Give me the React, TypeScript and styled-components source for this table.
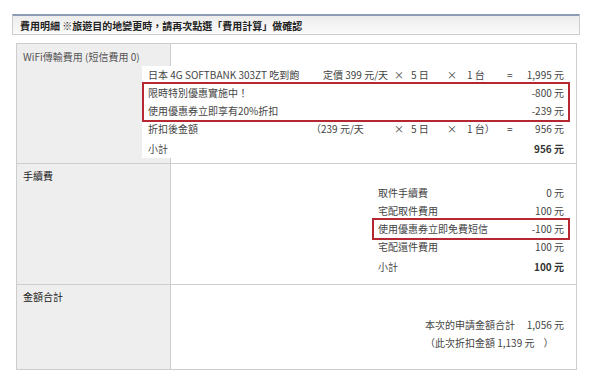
import styled, { createGlobalStyle } from 'styled-components';

const red = "#b52832";
const line = "#cdcdcd";

const GlobalStyle = createGlobalStyle`
  body {
    margin: 0;
    background: #ffffff;
    font-family: "Noto Sans CJK TC", "Noto Sans", sans-serif;
  }
`;

const Page = styled.div`
  width: 600px;
  height: 384px;
  box-sizing: border-box;
  padding: 14px 0 0 12px;
`;

const Header = styled.div`
  width: 568px;
  height: 21px;
  box-sizing: border-box;
  display: flex;
  align-items: center;
  padding-left: 7px;
  border: 1px solid ${line};
  border-top: 2px solid #8d9cb2;
  background: linear-gradient(#ececec, #fbfbfb);
  font-size: 10px;
  font-weight: bold;
  color: #222;
`;

const Table = styled.div`
  margin: 8px 0 0 4px;
  width: 561px;
  box-sizing: border-box;
  border: 1px solid ${line};
`;

const Section = styled.div<{ $height: number }>`
  display: grid;
  grid-template-columns: 154px 1fr;
  height: ${p => p.$height}px;
  & + & {
    border-top: 1px solid ${line};
  }
`;

const Label = styled.div<{ $top: number; $muted?: boolean }>`
  background: #eeeeee;
  border-right: 1px solid ${line};
  padding: ${p => p.$top}px 6px 0;
  font-size: 10px;
  line-height: 18px;
  color: ${p => (p.$muted ? "#555" : "#222")};
`;

const Content = styled.div<{ $top: number }>`
  display: flex;
  flex-direction: column;
  align-items: flex-end;
  padding-top: ${p => p.$top}px;
  padding-right: 6px;
  min-width: 0;
`;

const List = styled.div<{ $width: number }>`
  width: ${p => p.$width}px;
  background: #ffffff;
  font-size: 10px;
  line-height: 18px;
  color: #444;
`;

const Row = styled.div<{ $total?: boolean }>`
  display: flex;
  justify-content: space-between;
  padding: 0 6px;
  white-space: nowrap;
  margin-top: ${p => (p.$total ? 2 : 0)}px;
`;

const PriceRow = styled.div`
  display: grid;
  grid-template-columns: 175px 71px 17px 36px 20px 40px 13px 1fr;
  padding: 0 6px;
  white-space: nowrap;
`;

const Amount = styled.span<{ $bold?: boolean }>`
  text-align: right;
  font-weight: ${p => (p.$bold ? "bold" : "normal")};
  color: ${p => (p.$bold ? "#333" : "#444")};
`;

const Hang = styled.span`
  margin-left: -12px;
`;

const Boxed = styled.div`
  margin: -2px 0;
  border: 2px solid ${red};
  & > div {
    padding: 0 4px;
  }
`;

const Note = styled.div`
  padding: 0 6px;
  white-space: pre;
`;

export default function App() {
  return (
    <Page>
      <GlobalStyle />
      <Header>費用明細 ※旅遊目的地變更時，請再次點選「費用計算」做確認</Header>
      <Table>
        <Section $height={119}>
          <Label $top={4} $muted>WiFi傳輸費用 (短信費用 0)</Label>
          <Content $top={22}>
            <List $width={428}>
              <PriceRow>
                <span>日本 4G SOFTBANK 303ZT 吃到飽</span>
                <span>定價 399 元/天</span>
                <span>×</span>
                <span>5 日</span>
                <span>×</span>
                <span>1 台</span>
                <span>=</span>
                <Amount>1,995 元</Amount>
              </PriceRow>
              <Boxed>
                <Row>
                  <span>限時特別優惠實施中！</span>
                  <Amount>-800 元</Amount>
                </Row>
                <Row>
                  <span>使用優惠券立即享有20%折扣</span>
                  <Amount>-239 元</Amount>
                </Row>
              </Boxed>
              <PriceRow>
                <span>折扣後金額</span>
                <span><Hang>（</Hang>239 元/天</span>
                <span>×</span>
                <span>5 日</span>
                <span>×</span>
                <span>1 台）</span>
                <span>=</span>
                <Amount>956 元</Amount>
              </PriceRow>
              <Row $total>
                <span>小計</span>
                <Amount $bold>956 元</Amount>
              </Row>
            </List>
          </Content>
        </Section>
        <Section $height={120}>
          <Label $top={3}>手續費</Label>
          <Content $top={20}>
            <List $width={198}>
              <Row>
                <span>取件手續費</span>
                <Amount>0 元</Amount>
              </Row>
              <Row>
                <span>宅配取件費用</span>
                <Amount>100 元</Amount>
              </Row>
              <Boxed>
                <Row>
                  <span>使用優惠券立即免費短信</span>
                  <Amount>-100 元</Amount>
                </Row>
              </Boxed>
              <Row>
                <span>宅配還件費用</span>
                <Amount>100 元</Amount>
              </Row>
              <Row $total>
                <span>小計</span>
                <Amount $bold>100 元</Amount>
              </Row>
            </List>
          </Content>
        </Section>
        <Section $height={84}>
          <Label $top={3}>金額合計</Label>
          <Content $top={31}>
            <List $width={151}>
              <Row>
                <span>本次的申請金額合計</span>
                <Amount>1,056 元</Amount>
              </Row>
              <Note>（此次折扣金額 1,139 元    ）</Note>
            </List>
          </Content>
        </Section>
      </Table>
    </Page>
  );
}
